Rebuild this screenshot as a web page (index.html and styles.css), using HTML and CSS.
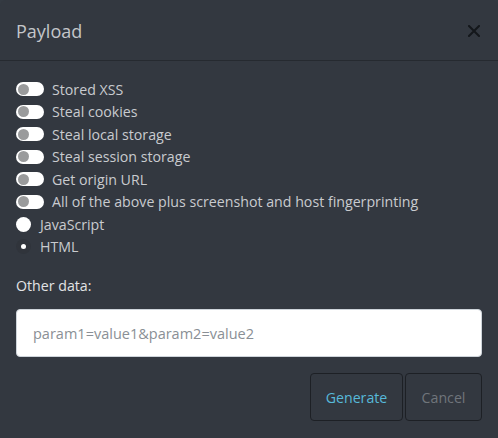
FILE: index.html
```html
<!DOCTYPE html>
<html>
<head>
<meta charset="utf-8">
<link rel="stylesheet" href="styles.css">
</head>
<body>
<div class="modal">
  <div class="modal-header">
    <h5 class="title">Payload</h5>
    <span class="close"><svg width="12" height="12" viewBox="0 0 12 12"><path d="M1 1 L11 11 M11 1 L1 11" stroke="#14171b" stroke-width="2" stroke-linecap="square"/></svg></span>
  </div>
  <div class="modal-body">
    <div class="opts">
      <label class="opt"><span class="toggle"><span class="knob"></span></span>Stored XSS</label>
      <label class="opt"><span class="toggle"><span class="knob"></span></span>Steal cookies</label>
      <label class="opt"><span class="toggle"><span class="knob"></span></span>Steal local storage</label>
      <label class="opt"><span class="toggle"><span class="knob"></span></span>Steal session storage</label>
      <label class="opt"><span class="toggle"><span class="knob"></span></span>Get origin URL</label>
      <label class="opt"><span class="toggle"><span class="knob"></span></span>All of the above plus screenshot and host fingerprinting</label>
      <label class="opt"><span class="radio"></span>JavaScript</label>
      <label class="opt"><span class="radio checked"></span>HTML</label>
    </div>
    <div class="field-label">Other data:</div>
    <div class="input"><span class="placeholder">param1=value1&amp;param2=value2</span></div>
  </div>
  <div class="modal-footer">
    <button class="btn btn-gen">Generate</button>
    <button class="btn btn-cancel">Cancel</button>
  </div>
</div>
</body>
</html>
```
FILE: styles.css
```css
* { box-sizing: border-box; }
html, body { margin: 0; padding: 0; background: #343a42; }
body {
  font-family: "Open Sans", "Noto Sans", sans-serif;
  color: #c9cbcf;
  width: 498px;
  height: 438px;
  overflow: hidden;
}
.modal {
  background: #333840;
  height: 438px;
  border-radius: 6px 6px 0 0;
  display: flex;
  flex-direction: column;
}
.modal-header {
  height: 61px;
  border-bottom: 1px solid #262a30;
  display: flex;
  align-items: center;
  justify-content: space-between;
  padding: 0 18px 0 16px;
}
.title {
  margin: 0;
  font-size: 18px;
  font-weight: 400;
  color: #c4c6ca;
  padding-top: 2px;
}
.close {
  display: flex;
  margin-top: 1px;
}
.modal-body {
  padding: 17px 16px 0 16px;
}
.opts {
  display: flex;
  flex-direction: column;
}
.opt {
  display: flex;
  align-items: center;
  height: 22.5px;
  font-size: 14.2px;
  color: #c9cbcf;
  white-space: nowrap;
}
.toggle {
  width: 28px;
  height: 14px;
  border-radius: 7px;
  background: #ffffff;
  margin-right: 8px;
  display: flex;
  align-items: center;
  padding-left: 2px;
  flex: none;
}
.knob {
  width: 11px;
  height: 11px;
  border-radius: 50%;
  background: #9a9b9c;
}
.radio {
  width: 15px;
  height: 15px;
  border-radius: 50%;
  background: #ffffff;
  margin-right: 9px;
  flex: none;
  display: flex;
  align-items: center;
  justify-content: center;
}
.radio.checked {
  background: #30343b;
}
.radio.checked::after {
  content: "";
  width: 5px;
  height: 5px;
  border-radius: 50%;
  background: #ffffff;
}
.field-label {
  margin-top: 16px;
  font-size: 14.2px;
  color: #e2e3e5;
  height: 22px;
  display: flex;
  align-items: center;
}
.input {
  margin-top: 13px;
  height: 48px;
  background: #ffffff;
  border: 1px solid #ced4da;
  border-radius: 4px;
  display: flex;
  align-items: center;
  padding-left: 16px;
}
.placeholder {
  color: #8a8f95;
  font-size: 14.5px;
}
.modal-footer {
  display: flex;
  justify-content: flex-end;
  gap: 2px;
  padding: 16px 16px 0 16px;
}
.btn {
  height: 48px;
  background: #333840;
  border: 1px solid #1d2025;
  border-radius: 4px;
  font-family: inherit;
  font-size: 14.2px;
  padding: 0;
}
.btn-gen {
  width: 93px;
  color: #57b9d9;
}
.btn-cancel {
  width: 77px;
  color: #70757b;
}
```
